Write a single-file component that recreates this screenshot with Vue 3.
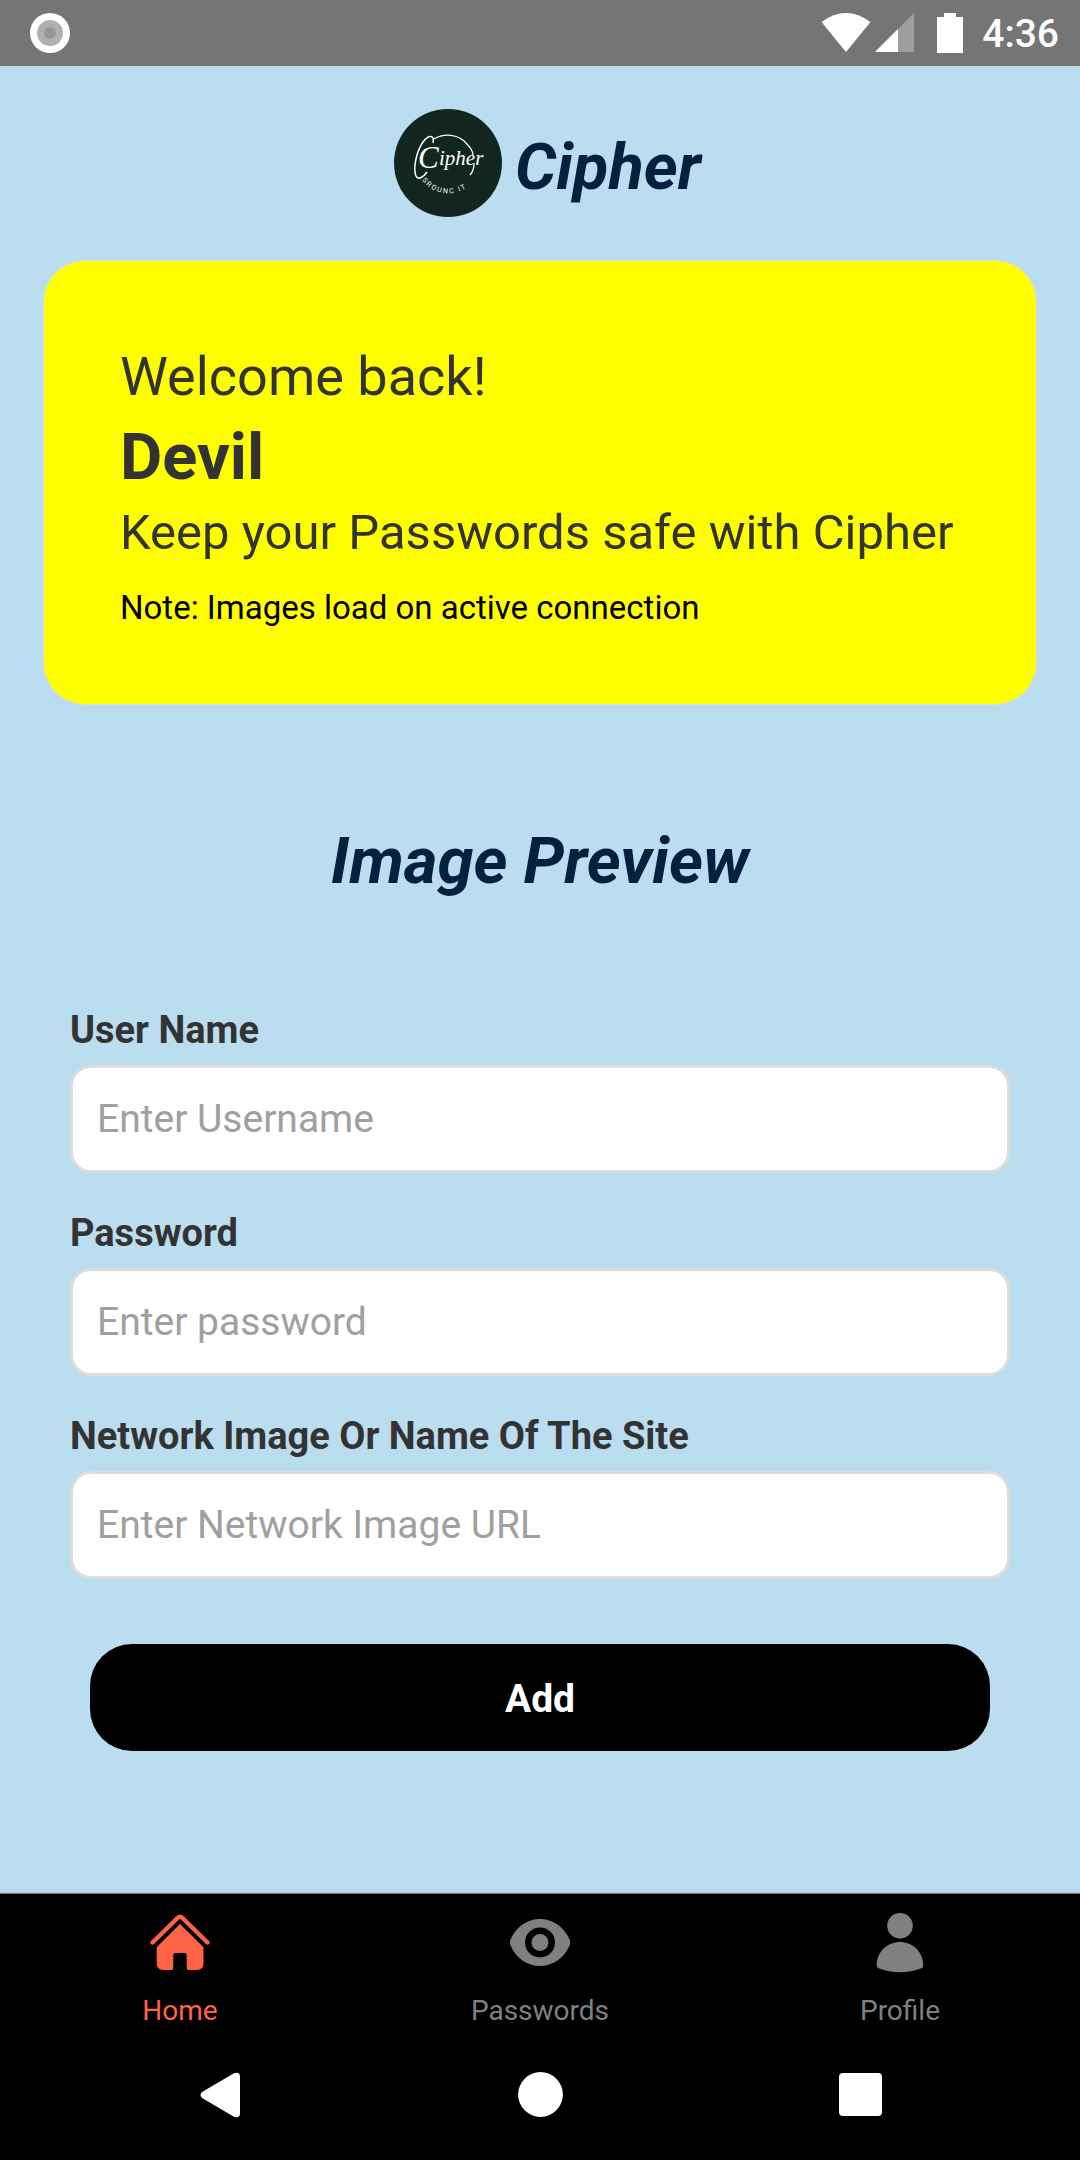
<script setup>
import { ref } from 'vue'

const fields = ref([
  { id: 'username', label: 'User Name', hint: 'Enter Username', type: 'text', value: '' },
  { id: 'password', label: 'Password', hint: 'Enter password', type: 'password', value: '' },
  { id: 'site', label: 'Network Image Or Name Of The Site', hint: 'Enter Network Image URL', type: 'text', value: '' }
])
</script>

<template>
  <div class="screen">
    <div class="status">
      <svg class="status-app" width="40" height="40" viewBox="0 0 40 40" aria-hidden="true">
        <circle cx="20" cy="20" r="20" fill="#fff" />
        <circle cx="20" cy="20" r="13" fill="#b0b0b0" />
        <circle cx="20" cy="20" r="6" fill="#979797" />
      </svg>
      <div class="status-right">
        <svg width="50" height="40" viewBox="0 0 50 40" aria-hidden="true">
          <path d="M0.5 9 Q25 -9 49.5 9 L25 39Z" fill="#fff" />
        </svg>
        <svg class="signal" width="40" height="40" viewBox="0 0 40 40" aria-hidden="true">
          <path d="M0 39 L39 0 V39Z" fill="#9e9e9e" />
          <path d="M0 39 L23 16 V39Z" fill="#fff" />
        </svg>
        <svg class="battery" width="26" height="40" viewBox="0 0 26 40" aria-hidden="true">
          <path d="M0 4H7V0H19V4H26V40H0Z" fill="#fff" />
        </svg>
        <span class="time">4:36</span>
      </div>
    </div>

    <main class="content">
      <header class="brand">
        <svg class="logo" width="108" height="108" viewBox="0 0 108 108" role="img" aria-label="Cipher logo">
          <circle cx="54" cy="54" r="54" fill="#12261f" />
          <path d="M40 30 C50 24 64 25 72 34 C77 39 79 43 79 46 M80 54 C80 59 79 63 76 66" fill="none" stroke="#fff" stroke-width="1.3" />
          <path d="M39 34 C41 25 34 26 29 33 C22 43 19 60 22 67 C24 71 29 69 33 63" fill="none" stroke="#fff" stroke-width="1.5" />
          <text class="script" x="24" y="59" font-size="31">C</text>
          <text class="script" x="45" y="56" font-size="21">ipher</text>
          <path id="motto" d="M28 71 A33 33 0 0 0 81 71" fill="none" />
          <text class="motto"><textPath href="#motto">S R O U N C &#160; I T</textPath></text>
        </svg>
        <h1 class="title">Cipher</h1>
      </header>

      <section class="card">
        <p class="welcome">Welcome back!</p>
        <p class="name">Devil</p>
        <p class="tagline">Keep your Passwords safe with Cipher</p>
        <p class="note">Note: Images load on active connection</p>
      </section>

      <h2 class="title preview">Image Preview</h2>

      <form class="form" @submit.prevent>
        <div v-for="f in fields" :key="f.id" class="field">
          <label :for="f.id">{{ f.label }}</label>
          <input :id="f.id" v-model="f.value" :type="f.type" :placeholder="f.hint" />
        </div>
        <button class="add" type="submit">Add</button>
      </form>
    </main>

    <nav class="tabs">
      <a class="tab active" href="#home">
        <svg width="60" height="60" viewBox="0 0 60 60" aria-hidden="true">
          <path d="M2.5 29.5 L27.5 5 Q30 2.6 32.5 5 L57.5 29.5" fill="none" stroke="currentColor" stroke-width="4.4" stroke-linecap="round" />
          <path d="M30 11 L53.5 34.3 V50.5 Q53.5 57 47 57 H38.5 Q36.7 57 36.7 55 V42 Q36.7 40 34.7 40 H25.3 Q23.3 40 23.3 42 V55 Q23.3 57 21.5 57 H13.2 Q6.7 57 6.7 50.5 V34.3Z" fill="currentColor" />
        </svg>
        <span>Home</span>
      </a>
      <a class="tab" href="#passwords">
        <svg width="60" height="60" viewBox="0 0 60 60" aria-hidden="true">
          <path d="M0.6 26.5 C6 14 17 6 30 6 S54 14 59.6 26.5 Q61 29.5 59.6 32.5 C54 45 43 53 30 53 S6 45 0.6 32.5 Q-0.8 29.5 0.6 26.5Z" fill="currentColor" />
          <circle cx="30" cy="29.4" r="15" fill="#000" />
          <circle cx="30" cy="29.4" r="8.5" fill="currentColor" />
        </svg>
        <span>Passwords</span>
      </a>
      <a class="tab" href="#profile">
        <svg width="60" height="60" viewBox="0 0 60 60" aria-hidden="true">
          <circle cx="30" cy="12.8" r="12.8" fill="currentColor" />
          <path d="M6.7 52.5 C6.7 39 17 29 30 29 S53.3 39 53.3 52.5 Q53.3 54.6 51.5 55.2 Q30 63.2 8.5 55.2 Q6.7 54.6 6.7 52.5Z" fill="currentColor" />
        </svg>
        <span>Profile</span>
      </a>
    </nav>

    <div class="system">
      <button type="button" aria-label="Back">
        <svg width="40" height="46" viewBox="0 0 40 46" aria-hidden="true">
          <path d="M2 20 L34 1.3 Q40 -1 40 5 V41 Q40 47 34 44.7 L2 26 Q-1 23 2 20Z" fill="#fff" />
        </svg>
      </button>
      <button type="button" aria-label="Home">
        <svg width="45" height="45" viewBox="0 0 45 45" aria-hidden="true">
          <circle cx="22.5" cy="22.5" r="22.4" fill="#fff" />
        </svg>
      </button>
      <button type="button" aria-label="Recent apps">
        <svg width="43" height="43" viewBox="0 0 43 43" aria-hidden="true">
          <rect width="43" height="43" rx="4" fill="#fff" />
        </svg>
      </button>
    </div>
  </div>
</template>

<style>
body {
  margin: 0;
  background: #badef0;
}
</style>

<style scoped>
.screen {
  min-height: 100vh;
  display: flex;
  flex-direction: column;
  background: #badef0;
  font-family: Roboto, "Liberation Sans", sans-serif;
  color: #333;
}
p,
h1,
h2 {
  margin: 0;
}
svg {
  display: block;
}
.status {
  display: flex;
  align-items: center;
  justify-content: space-between;
  height: 66px;
  box-sizing: border-box;
  padding: 0 21px 0 30px;
  background: #757575;
  color: #fff;
}
.status-right {
  display: flex;
  align-items: center;
}
.signal {
  margin-left: 4px;
}
.battery {
  margin: 0 19px 0 22px;
}
.time {
  padding-top: 2px;
  font-size: 39px;
  line-height: 46px;
  font-weight: 500;
}
.content {
  flex: 1;
  padding: 43px 43px;
}
.brand {
  display: flex;
  justify-content: center;
  align-items: center;
  gap: 13px;
  padding-left: 15px;
}
.script {
  font-family: "Liberation Serif", serif;
  font-style: italic;
  fill: #fff;
}
.motto {
  font-size: 7px;
  fill: #fff;
}
.title {
  font-size: 65px;
  line-height: 78px;
  font-weight: 700;
  font-style: italic;
  color: #03203f;
}
.brand .title {
  padding-top: 8px;
}
.card {
  margin-top: 43px;
  padding: 84px 76px 76px;
  border: 1px solid #ddd;
  border-radius: 42px;
  background: #ff0;
}
.welcome {
  font-size: 54px;
  line-height: 64px;
}
.name {
  margin-top: 9px;
  font-size: 65px;
  line-height: 78px;
  font-weight: 700;
}
.tagline {
  margin-top: 8px;
  font-size: 49px;
  line-height: 58px;
}
.note {
  margin-top: 26px;
  font-size: 33px;
  line-height: 40px;
  color: #000;
}
.preview {
  margin-top: 117px;
  text-align: center;
}
.form {
  display: flex;
  flex-direction: column;
  gap: 37px;
  margin: 107px 27px 0;
}
.field {
  display: flex;
  flex-direction: column;
  gap: 12px;
}
.field label {
  font-size: 38px;
  line-height: 46px;
  font-weight: 700;
}
.field input {
  height: 108px;
  box-sizing: border-box;
  padding: 0 24px;
  border: 3px solid #ddd;
  border-radius: 21px;
  background: #fff;
  font: 39px/46px Roboto, "Liberation Sans", sans-serif;
  color: #333;
}
.field input::placeholder {
  color: #a0a0a0;
  opacity: 1;
}
.add {
  height: 107px;
  margin: 28px 20px 0;
  padding: 3px 0 0;
  border: 0;
  border-radius: 42px;
  background: #000;
  color: #fff;
  font: 700 39px/46px Roboto, "Liberation Sans", sans-serif;
}
.tabs {
  display: grid;
  grid-template-columns: repeat(3, 1fr);
  padding: 19px 0 1px;
  border-top: 1px solid #6c7376;
  background: #000;
  box-shadow: 0 0 8px rgba(0, 0, 0, 0.12);
}
.tab {
  display: flex;
  flex-direction: column;
  align-items: center;
  gap: 21px;
  color: #808080;
  font-size: 28px;
  line-height: 34px;
  text-decoration: none;
}
.tab.active {
  color: #ff6347;
}
.system {
  display: grid;
  grid-template-columns: repeat(3, 1fr);
  height: 131px;
  padding: 0 60px;
  background: #000;
}
.system button {
  display: flex;
  align-items: center;
  justify-content: center;
  padding: 0;
  border: 0;
  background: none;
}
</style>
